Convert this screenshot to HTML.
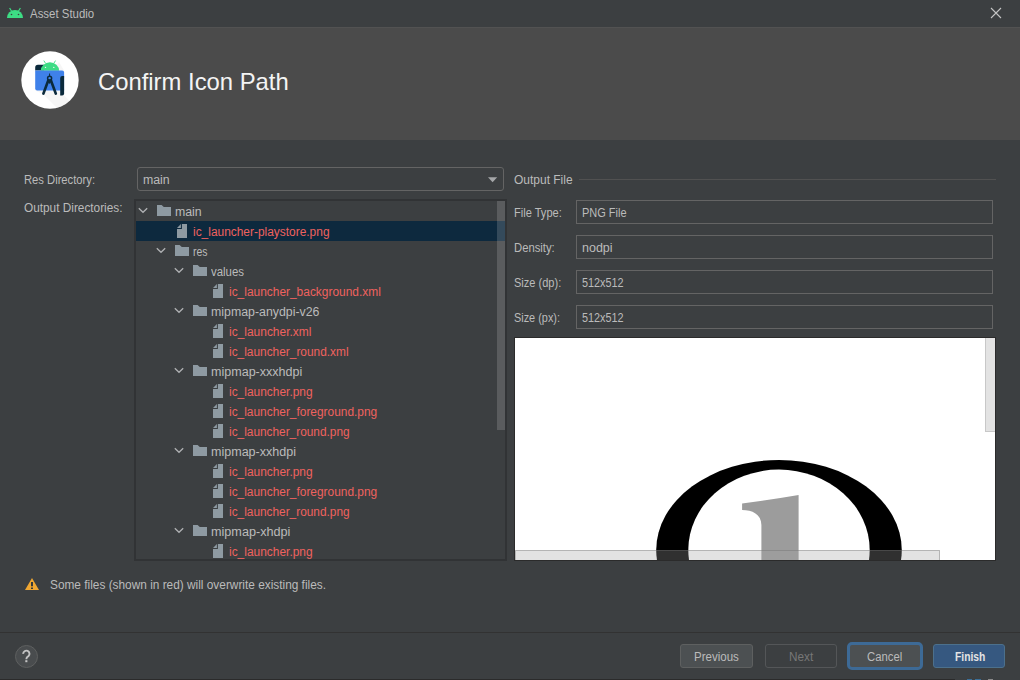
<!DOCTYPE html>
<html><head><meta charset="utf-8">
<style>
html,body{margin:0;padding:0;}
body{width:1020px;height:680px;overflow:hidden;position:relative;background:#3c3f41;font-family:"Liberation Sans",sans-serif;}
.t{position:absolute;white-space:nowrap;}
.a{position:absolute;display:block;}
.fld{position:absolute;left:576px;width:415px;height:22px;border:1px solid #646464;background:#3c3f41;}
</style></head><body>
<!-- title bar -->
<div class="a" style="left:0;top:0;width:1020px;height:27px;background:#3c3f41"></div>
<svg class="a" style="left:6px;top:7px" width="18" height="12" viewBox="0 0 18 12">
<path d="M1 11 A8 8 0 0 1 17 11 Z" fill="#3ddc84"/>
<path d="M3.6 1 L5.6 4.2 M14.4 1 L12.4 4.2" stroke="#3ddc84" stroke-width="1.2"/>
<circle cx="5.5" cy="7.5" r="0.8" fill="#3c3f41"/><circle cx="12.5" cy="7.5" r="0.8" fill="#3c3f41"/>
</svg>
<div class="t" style="left:30px;top:6.94px;font-size:12.3px;line-height:15px;color:#bbbbbb;;transform:scaleX(0.9298);transform-origin:0.00px 0;">Asset Studio</div>

<svg class="a" style="left:990px;top:7px" width="12" height="12" viewBox="0 0 12 12"><path d="M1 1 L11 11 M11 1 L1 11" stroke="#c4c4c4" stroke-width="1.1"/></svg>
<!-- header -->
<div class="a" style="left:0;top:27px;width:1020px;height:113px;background:#4b4b4b"></div>
<div class="a" style="left:0;top:27px;width:1020px;height:1px;background:#525252"></div>
<svg class="a" style="left:0;top:27px" width="100" height="113" viewBox="0 27 100 113">
<defs><clipPath id="cc"><circle cx="50" cy="80" r="28.7"/></clipPath></defs>
<circle cx="50" cy="80" r="28.7" fill="#fff"/>
<g clip-path="url(#cc)">
<path d="M59 62 L64.1 70.6 L64.1 95.4 L90 121 L70 121 L43 94 L35.2 90.6 Z" fill="#ececec" opacity="0.45"/>
</g>
<path d="M38 64.8 H44 V70.6 H35.2 V67.6 A2.8 2.8 0 0 1 38 64.8 Z" fill="#0b2a3c"/>
<path d="M40.8 70.8 A9.15 8.6 0 0 1 59.1 70.8 Z" fill="#3ddc84"/>
<path d="M43.8 60.6 L45.6 63.4 M55.5 60.6 L53.8 63.4" stroke="#3ddc84" stroke-width="0.9"/>
<circle cx="45.5" cy="67.4" r="0.7" fill="#e8f8ee"/><circle cx="53.8" cy="67.4" r="0.7" fill="#e8f8ee"/>
<path d="M35.2 70.6 H62.1 A2 2 0 0 1 64.1 72.6 V90.6 H37.2 A2 2 0 0 1 35.2 88.6 Z" fill="#3f81ea"/>
<path d="M60.2 77.9 A2 2 0 0 1 62.2 75.9 H64.1 V93.4 A2 2 0 0 1 62.1 95.4 H60.2 Z" fill="#0b2a3c"/>
<g stroke="#0b2a3c" fill="none" stroke-linecap="round">
<path d="M49.6 73.9 V75.8" stroke-width="1"/>
<circle cx="49.6" cy="78.3" r="2" stroke-width="1.5"/>
<path d="M48.2 80.6 L43.4 93.6 M51 80.6 L55.8 93.6" stroke-width="2.7"/>
<path d="M47 80.2 L49.6 84 L52.2 80.2 L49.6 79.2 Z" fill="#0b2a3c" stroke="none"/>
</g>
</svg>
<div class="t" style="left:98px;top:66.58px;font-size:24px;line-height:29px;color:#f4f4f4;;transform:scaleX(0.9927);transform-origin:0.00px 0;">Confirm Icon Path</div>

<!-- labels -->
<div class="t" style="left:24px;top:172.84px;font-size:12px;line-height:14px;color:#bbbbbb;;transform:scaleX(0.9342);transform-origin:0.00px 0;">Res Directory:</div>

<div class="t" style="left:24px;top:200.84px;font-size:12px;line-height:14px;color:#bbbbbb;;transform:scaleX(0.9845);transform-origin:0.00px 0;">Output Directories:</div>

<!-- combo -->
<div class="a" style="left:137px;top:167px;width:365px;height:22px;border:1px solid #646464;border-radius:3px;background:#3c3f41"></div>
<div class="t" style="left:143px;top:172.84px;font-size:12px;line-height:14px;color:#bbbbbb;;transform:scaleX(1.0269);transform-origin:0.00px 0;">main</div>

<svg class="a" style="left:488px;top:177px" width="10" height="6" viewBox="0 0 10 6"><path d="M0 0.2 H9.2 L4.6 5.3 Z" fill="#a5a7a9"/></svg>
<!-- tree -->
<div class="a" style="left:134px;top:199px;width:369px;height:359px;border:2px solid #313335;border-right:none;border-bottom:none;"></div>
<div class="a" style="left:505px;top:199px;width:2px;height:362px;background:#313335"></div>
<div class="a" style="left:134px;top:559px;width:373px;height:2px;background:#313335"></div>
<div class="a" style="left:136px;top:221px;width:369px;height:20px;background:#0d293e"></div>
<div class="a" style="left:136px;top:201px;width:369px;height:358px;overflow:hidden">
<div style="position:absolute;left:-136px;top:-201px;width:1020px;height:680px">
<svg class="a" style="left:138px;top:207px" width="11" height="7" viewBox="0 0 11 7"><path d="M0.8 1.2 L5 5.3 L9.2 1.2" fill="none" stroke="#afb1b3" stroke-width="1.3"/></svg>
<svg class="a" style="left:157px;top:205px" width="14" height="12" viewBox="0 0 14 12"><path d="M0 0 H4.6 L6.8 2 H14 V11 H0 Z" fill="#8e9aa2"/></svg>
<div class="t" style="left:175px;top:204.84px;font-size:12px;line-height:14px;color:#bbbbbb;;transform:scaleX(1.0269);transform-origin:0.00px 0;">main</div>
<svg class="a" style="left:177px;top:224px" width="10" height="14" viewBox="0 0 10 14"><path d="M4.9 0 H10 V14 H0 V5 H4.9 Z" fill="#8e9aa2"/><path d="M0 3.9 H3.9 V0 Z" fill="#8e9aa2"/></svg>
<div class="t" style="left:193px;top:224.84px;font-size:12px;line-height:14px;color:#ef625f;;transform:scaleX(0.9934);transform-origin:0.00px 0;">ic_launcher-playstore.png</div>
<svg class="a" style="left:156px;top:247px" width="11" height="7" viewBox="0 0 11 7"><path d="M0.8 1.2 L5 5.3 L9.2 1.2" fill="none" stroke="#afb1b3" stroke-width="1.3"/></svg>
<svg class="a" style="left:175px;top:245px" width="14" height="12" viewBox="0 0 14 12"><path d="M0 0 H4.6 L6.8 2 H14 V11 H0 Z" fill="#8e9aa2"/></svg>
<div class="t" style="left:193px;top:244.84px;font-size:12px;line-height:14px;color:#bbbbbb;;transform:scaleX(0.8709);transform-origin:0.00px 0;">res</div>
<svg class="a" style="left:174px;top:267px" width="11" height="7" viewBox="0 0 11 7"><path d="M0.8 1.2 L5 5.3 L9.2 1.2" fill="none" stroke="#afb1b3" stroke-width="1.3"/></svg>
<svg class="a" style="left:193px;top:265px" width="14" height="12" viewBox="0 0 14 12"><path d="M0 0 H4.6 L6.8 2 H14 V11 H0 Z" fill="#8e9aa2"/></svg>
<div class="t" style="left:211px;top:264.84px;font-size:12px;line-height:14px;color:#bbbbbb;;transform:scaleX(0.9510);transform-origin:0.00px 0;">values</div>
<svg class="a" style="left:213px;top:284px" width="10" height="14" viewBox="0 0 10 14"><path d="M4.9 0 H10 V14 H0 V5 H4.9 Z" fill="#8e9aa2"/><path d="M0 3.9 H3.9 V0 Z" fill="#8e9aa2"/></svg>
<div class="t" style="left:229px;top:284.84px;font-size:12px;line-height:14px;color:#ef625f;;transform:scaleX(0.9938);transform-origin:0.00px 0;">ic_launcher_background.xml</div>
<svg class="a" style="left:174px;top:307px" width="11" height="7" viewBox="0 0 11 7"><path d="M0.8 1.2 L5 5.3 L9.2 1.2" fill="none" stroke="#afb1b3" stroke-width="1.3"/></svg>
<svg class="a" style="left:193px;top:305px" width="14" height="12" viewBox="0 0 14 12"><path d="M0 0 H4.6 L6.8 2 H14 V11 H0 Z" fill="#8e9aa2"/></svg>
<div class="t" style="left:211px;top:304.84px;font-size:12px;line-height:14px;color:#bbbbbb;;transform:scaleX(1.0294);transform-origin:0.00px 0;">mipmap-anydpi-v26</div>
<svg class="a" style="left:213px;top:324px" width="10" height="14" viewBox="0 0 10 14"><path d="M4.9 0 H10 V14 H0 V5 H4.9 Z" fill="#8e9aa2"/><path d="M0 3.9 H3.9 V0 Z" fill="#8e9aa2"/></svg>
<div class="t" style="left:229px;top:324.84px;font-size:12px;line-height:14px;color:#ef625f;;transform:scaleX(0.9964);transform-origin:0.00px 0;">ic_launcher.xml</div>
<svg class="a" style="left:213px;top:344px" width="10" height="14" viewBox="0 0 10 14"><path d="M4.9 0 H10 V14 H0 V5 H4.9 Z" fill="#8e9aa2"/><path d="M0 3.9 H3.9 V0 Z" fill="#8e9aa2"/></svg>
<div class="t" style="left:229px;top:344.84px;font-size:12px;line-height:14px;color:#ef625f;;transform:scaleX(0.9905);transform-origin:0.00px 0;">ic_launcher_round.xml</div>
<svg class="a" style="left:174px;top:367px" width="11" height="7" viewBox="0 0 11 7"><path d="M0.8 1.2 L5 5.3 L9.2 1.2" fill="none" stroke="#afb1b3" stroke-width="1.3"/></svg>
<svg class="a" style="left:193px;top:365px" width="14" height="12" viewBox="0 0 14 12"><path d="M0 0 H4.6 L6.8 2 H14 V11 H0 Z" fill="#8e9aa2"/></svg>
<div class="t" style="left:211px;top:364.84px;font-size:12px;line-height:14px;color:#bbbbbb;;transform:scaleX(1.0452);transform-origin:0.00px 0;">mipmap-xxxhdpi</div>
<svg class="a" style="left:213px;top:384px" width="10" height="14" viewBox="0 0 10 14"><path d="M4.9 0 H10 V14 H0 V5 H4.9 Z" fill="#8e9aa2"/><path d="M0 3.9 H3.9 V0 Z" fill="#8e9aa2"/></svg>
<div class="t" style="left:229px;top:384.84px;font-size:12px;line-height:14px;color:#ef625f;;transform:scaleX(0.9946);transform-origin:0.00px 0;">ic_launcher.png</div>
<svg class="a" style="left:213px;top:404px" width="10" height="14" viewBox="0 0 10 14"><path d="M4.9 0 H10 V14 H0 V5 H4.9 Z" fill="#8e9aa2"/><path d="M0 3.9 H3.9 V0 Z" fill="#8e9aa2"/></svg>
<div class="t" style="left:229px;top:404.84px;font-size:12px;line-height:14px;color:#ef625f;;transform:scaleX(0.9916);transform-origin:0.00px 0;">ic_launcher_foreground.png</div>
<svg class="a" style="left:213px;top:424px" width="10" height="14" viewBox="0 0 10 14"><path d="M4.9 0 H10 V14 H0 V5 H4.9 Z" fill="#8e9aa2"/><path d="M0 3.9 H3.9 V0 Z" fill="#8e9aa2"/></svg>
<div class="t" style="left:229px;top:424.84px;font-size:12px;line-height:14px;color:#ef625f;;transform:scaleX(0.9877);transform-origin:0.00px 0;">ic_launcher_round.png</div>
<svg class="a" style="left:174px;top:447px" width="11" height="7" viewBox="0 0 11 7"><path d="M0.8 1.2 L5 5.3 L9.2 1.2" fill="none" stroke="#afb1b3" stroke-width="1.3"/></svg>
<svg class="a" style="left:193px;top:445px" width="14" height="12" viewBox="0 0 14 12"><path d="M0 0 H4.6 L6.8 2 H14 V11 H0 Z" fill="#8e9aa2"/></svg>
<div class="t" style="left:211px;top:444.84px;font-size:12px;line-height:14px;color:#bbbbbb;;transform:scaleX(1.0449);transform-origin:0.00px 0;">mipmap-xxhdpi</div>
<svg class="a" style="left:213px;top:464px" width="10" height="14" viewBox="0 0 10 14"><path d="M4.9 0 H10 V14 H0 V5 H4.9 Z" fill="#8e9aa2"/><path d="M0 3.9 H3.9 V0 Z" fill="#8e9aa2"/></svg>
<div class="t" style="left:229px;top:464.84px;font-size:12px;line-height:14px;color:#ef625f;;transform:scaleX(0.9946);transform-origin:0.00px 0;">ic_launcher.png</div>
<svg class="a" style="left:213px;top:484px" width="10" height="14" viewBox="0 0 10 14"><path d="M4.9 0 H10 V14 H0 V5 H4.9 Z" fill="#8e9aa2"/><path d="M0 3.9 H3.9 V0 Z" fill="#8e9aa2"/></svg>
<div class="t" style="left:229px;top:484.84px;font-size:12px;line-height:14px;color:#ef625f;;transform:scaleX(0.9916);transform-origin:0.00px 0;">ic_launcher_foreground.png</div>
<svg class="a" style="left:213px;top:504px" width="10" height="14" viewBox="0 0 10 14"><path d="M4.9 0 H10 V14 H0 V5 H4.9 Z" fill="#8e9aa2"/><path d="M0 3.9 H3.9 V0 Z" fill="#8e9aa2"/></svg>
<div class="t" style="left:229px;top:504.84px;font-size:12px;line-height:14px;color:#ef625f;;transform:scaleX(0.9877);transform-origin:0.00px 0;">ic_launcher_round.png</div>
<svg class="a" style="left:174px;top:527px" width="11" height="7" viewBox="0 0 11 7"><path d="M0.8 1.2 L5 5.3 L9.2 1.2" fill="none" stroke="#afb1b3" stroke-width="1.3"/></svg>
<svg class="a" style="left:193px;top:525px" width="14" height="12" viewBox="0 0 14 12"><path d="M0 0 H4.6 L6.8 2 H14 V11 H0 Z" fill="#8e9aa2"/></svg>
<div class="t" style="left:211px;top:524.84px;font-size:12px;line-height:14px;color:#bbbbbb;;transform:scaleX(1.0537);transform-origin:0.00px 0;">mipmap-xhdpi</div>
<svg class="a" style="left:213px;top:544px" width="10" height="14" viewBox="0 0 10 14"><path d="M4.9 0 H10 V14 H0 V5 H4.9 Z" fill="#8e9aa2"/><path d="M0 3.9 H3.9 V0 Z" fill="#8e9aa2"/></svg>
<div class="t" style="left:229px;top:544.84px;font-size:12px;line-height:14px;color:#ef625f;;transform:scaleX(0.9946);transform-origin:0.00px 0;">ic_launcher.png</div>

</div></div>
<div class="a" style="left:497px;top:201px;width:8px;height:229px;background:rgba(210,210,210,0.2)"></div>
<!-- output file -->
<div class="t" style="left:514px;top:172.84px;font-size:12px;line-height:14px;color:#bbbbbb;;transform:scaleX(0.9983);transform-origin:0.00px 0;">Output File</div>

<div class="a" style="left:579px;top:179px;width:417px;height:1px;background:#515151"></div>
<div class="t" style="left:514px;top:205.84px;font-size:12px;line-height:14px;color:#bbbbbb;;transform:scaleX(0.9228);transform-origin:0.00px 0;">File Type:</div>
<div class="fld" style="top:200px"></div>
<div class="t" style="left:582px;top:205.84px;font-size:12px;line-height:14px;color:#bbbbbb;;transform:scaleX(0.9158);transform-origin:0.00px 0;">PNG File</div>
<div class="t" style="left:514px;top:240.84px;font-size:12px;line-height:14px;color:#bbbbbb;;transform:scaleX(0.9389);transform-origin:0.00px 0;">Density:</div>
<div class="fld" style="top:235px"></div>
<div class="t" style="left:582px;top:240.84px;font-size:12px;line-height:14px;color:#bbbbbb;;transform:scaleX(1.0426);transform-origin:0.00px 0;">nodpi</div>
<div class="t" style="left:514px;top:275.84px;font-size:12px;line-height:14px;color:#bbbbbb;;transform:scaleX(0.9192);transform-origin:0.00px 0;">Size (dp):</div>
<div class="fld" style="top:270px"></div>
<div class="t" style="left:582px;top:275.84px;font-size:12px;line-height:14px;color:#bbbbbb;;transform:scaleX(0.9034);transform-origin:0.00px 0;">512x512</div>
<div class="t" style="left:514px;top:310.84px;font-size:12px;line-height:14px;color:#bbbbbb;;transform:scaleX(0.9073);transform-origin:0.00px 0;">Size (px):</div>
<div class="fld" style="top:305px"></div>
<div class="t" style="left:582px;top:310.84px;font-size:12px;line-height:14px;color:#bbbbbb;;transform:scaleX(0.9034);transform-origin:0.00px 0;">512x512</div>

<!-- preview -->
<div class="a" style="left:514px;top:337px;width:482px;height:224px;background:#2b2b2b"></div>
<div class="a" style="left:515px;top:338px;width:480px;height:222px;background:#fff;overflow:hidden">
<svg class="a" style="left:0;top:0" width="480" height="222" viewBox="515 338 480 222">
<ellipse cx="779" cy="550" rx="122.8" ry="90" fill="#000"/><ellipse cx="779" cy="550" rx="90.7" ry="80.4" fill="#fff"/>
<path fill="#9c9c9c" d="M742.1 503.4 Q770 499.8 798.6 494.9 V562 H761.4 V525 C761.4 514 752 510 742.1 510 Z"/>
<rect x="985.5" y="337.5" width="10" height="94" fill="#e3e3e3" stroke="#c8c8c8" stroke-width="1"/>
<rect x="515.5" y="550.5" width="424" height="12" fill="rgba(160,160,160,0.3)" stroke="rgba(120,120,120,0.5)" stroke-width="1"/>
</svg>
</div>
<!-- warning -->
<svg class="a" style="left:24px;top:577px" width="16" height="14" viewBox="0 0 16 14"><path d="M8 1 L15 13 H1 Z" fill="#f0a732"/><rect x="7.1" y="5" width="1.8" height="4.3" fill="#1f2f3f"/><rect x="7.1" y="10.5" width="1.8" height="1.5" fill="#1f2f3f"/></svg>
<div class="t" style="left:50px;top:577.84px;font-size:12px;line-height:14px;color:#bbbbbb;;transform:scaleX(0.9877);transform-origin:0.00px 0;">Some files (shown in red) will overwrite existing files.</div>

<!-- bottom -->
<div class="a" style="left:0;top:632px;width:1020px;height:1px;background:#323232"></div>
<div class="a" style="left:15px;top:645px;width:21px;height:21px;border:1px solid #5e6060;border-radius:50%;background:#494c4e"></div>
<svg class="a" style="left:0;top:640px" width="40" height="30" viewBox="0 640 40 30"><path d="M23.2 653.9 A3.15 3.15 0 1 1 28.4 656.2 Q26.3 657.3 26.3 659.2" fill="none" stroke="#c4c4c4" stroke-width="1.9"/><rect x="25.3" y="660.2" width="2.1" height="2" fill="#c4c4c4"/></svg>
<div class="a" style="left:680px;top:644px;width:71px;height:22px;border:1px solid #5e6060;border-radius:3px;background:#4c5052"></div>
<div class="t" style="left:694px;top:649.84px;font-size:12px;line-height:14px;color:#bbbbbb;;transform:scaleX(0.9593);transform-origin:0.00px 0;">Previous</div>

<div class="a" style="left:765px;top:644px;width:70px;height:22px;border:1px solid #545658;border-radius:3px;background:#3c3f41"></div>
<div class="t" style="left:789px;top:649.84px;font-size:12px;line-height:14px;color:#777777;;transform:scaleX(0.9798);transform-origin:0.00px 0;">Next</div>

<div class="a" style="left:847px;top:642px;width:70px;height:22px;border:3px solid #3d6a96;border-radius:5px;background:#4c5052"></div>
<div class="t" style="left:867px;top:649.84px;font-size:12px;line-height:14px;color:#bbbbbb;;transform:scaleX(0.9424);transform-origin:0.00px 0;">Cancel</div>

<div class="a" style="left:933px;top:644px;width:70px;height:22px;border:1px solid #4c708c;border-radius:3px;background:#365880"></div>
<div class="t" style="left:955px;top:649.84px;font-size:12px;line-height:14px;color:#e4e4e4;font-weight:bold;transform:scaleX(0.8571);transform-origin:0.00px 0;">Finish</div>

<div class="a" style="left:0;top:679px;width:955px;height:1px;background:#2b2b2b"></div>
<div class="a" style="left:967px;top:679px;width:5px;height:1px;background:#3a6f99"></div>
<div class="a" style="left:975px;top:679px;width:6px;height:1px;background:#3a6f99"></div>
<div class="a" style="left:988px;top:679px;width:5px;height:1px;background:#8a8a8a"></div>
</body></html>
